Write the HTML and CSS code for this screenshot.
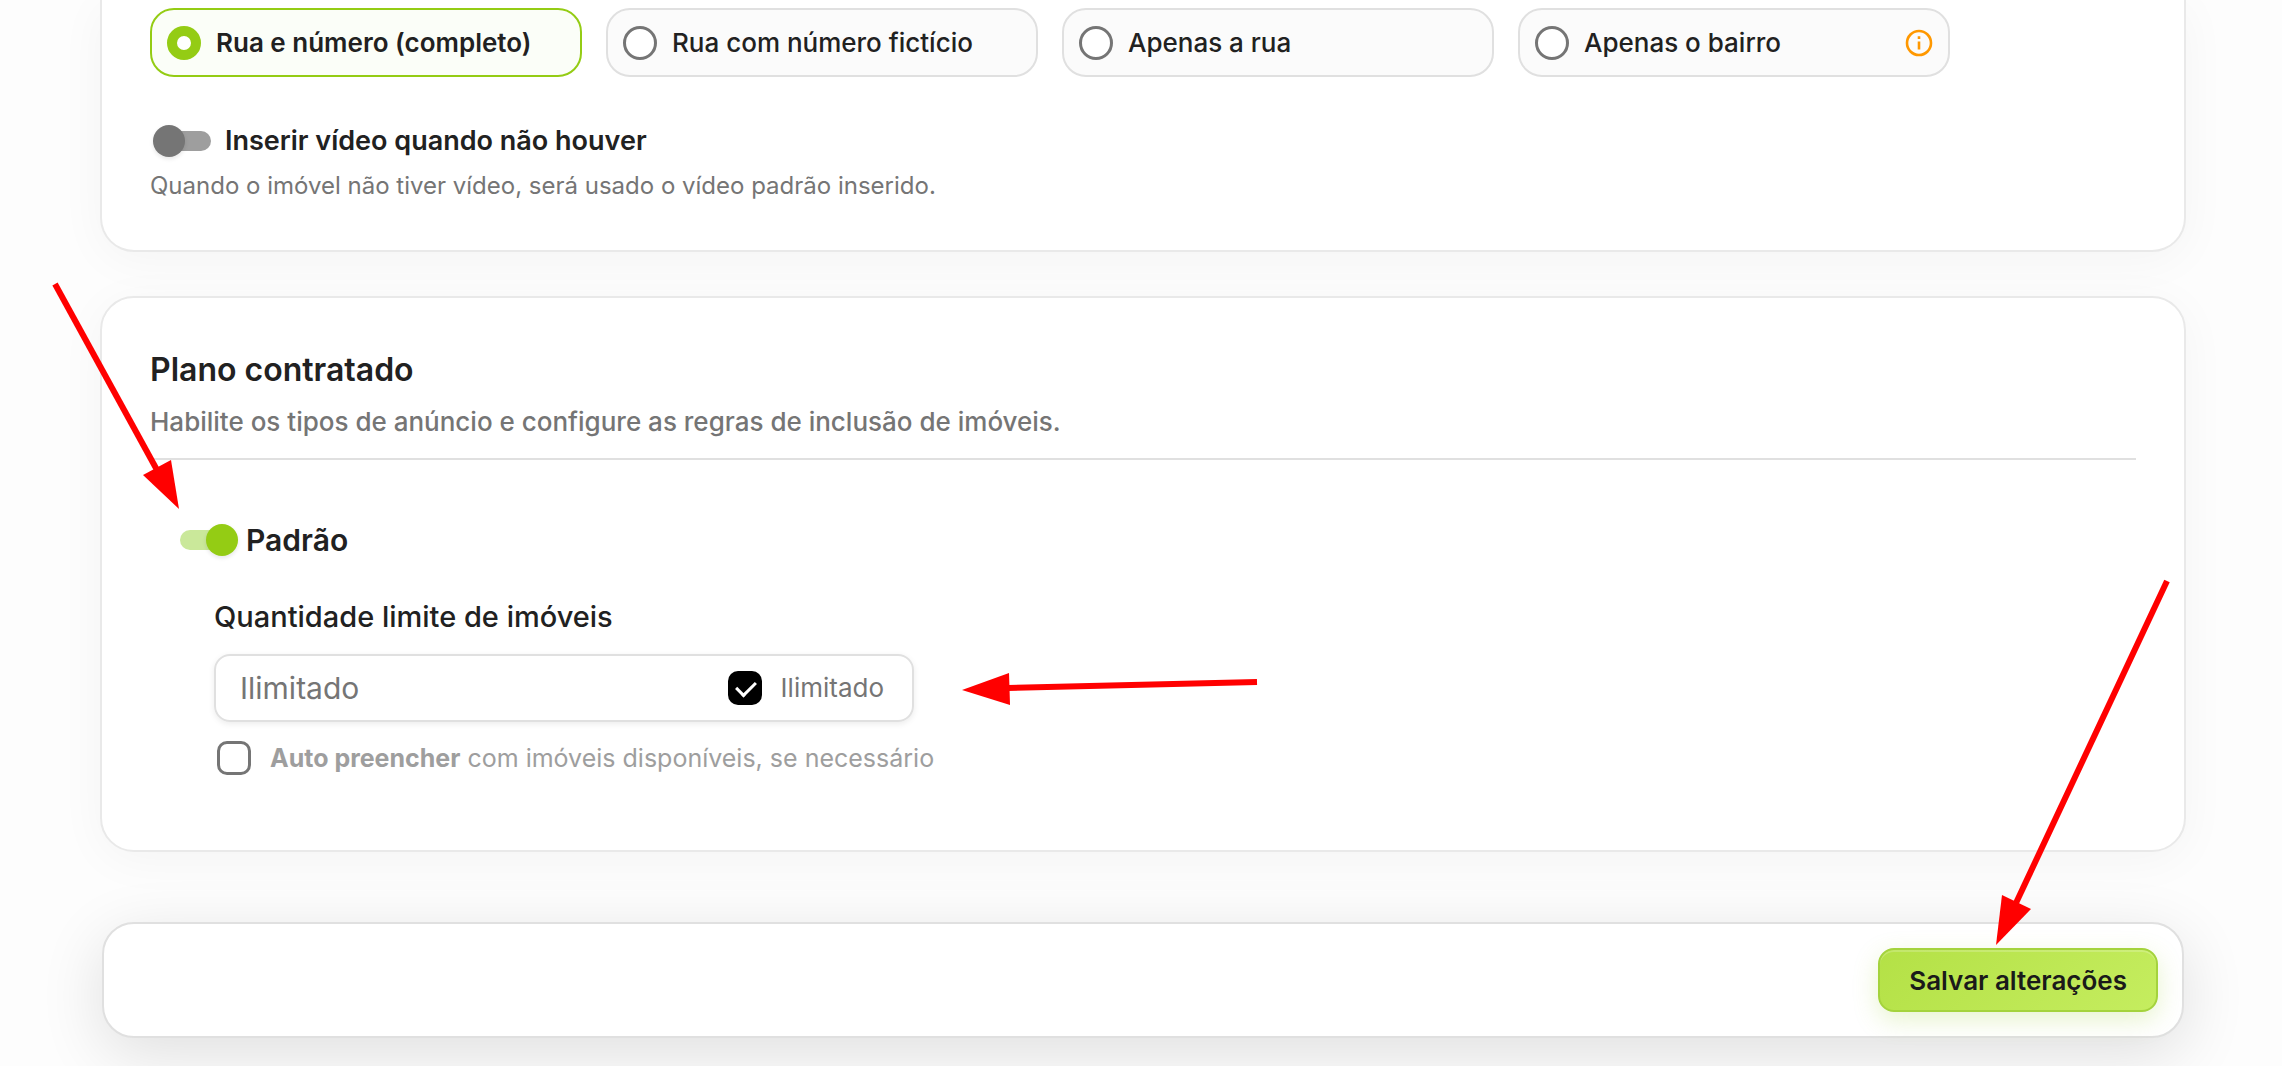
FILE: index.html
```html
<!DOCTYPE html>
<html lang="pt-BR">

<head>
  <meta charset="UTF-8" />
  <meta name="viewport" content="width=device-width, initial-scale=1.0" />
  <title>Configurações do portal</title>
  <link rel="stylesheet" href="styles.css">
</head>

<body>

  <main class="page">
    <section class="card card-address">
      <div class="options">
        <label class="option selected">
          <input type="radio" class="radio" name="endereco" checked>
          <span>Rua e número (completo)</span>
        </label>
        <label class="option">
          <input type="radio" class="radio" name="endereco">
          <span>Rua com número fictício</span>
        </label>
        <label class="option">
          <input type="radio" class="radio" name="endereco">
          <span>Apenas a rua</span>
        </label>
        <label class="option">
          <input type="radio" class="radio" name="endereco">
          <span>Apenas o bairro</span>
          <svg class="info" viewBox="0 0 28 28" aria-hidden="true">
            <circle cx="14" cy="14" r="12" fill="none" stroke="#ff9800" stroke-width="2.6" />
            <path d="M14 12.500v8M14 7.200v2.800" stroke="#ff9800" stroke-width="2.6" />
          </svg>
        </label>
      </div>

      <label class="toggle toggle-video">
        <input type="checkbox" class="switch">
        <span>Inserir vídeo quando não houver</span>
      </label>
      <p class="hint">Quando o imóvel não tiver vídeo, será usado o vídeo padrão inserido.</p>
    </section>

    <section class="card card-plan">
      <header class="card-header">
        <h2>Plano contratado</h2>
        <p>Habilite os tipos de anúncio e configure as regras de inclusão de imóveis.</p>
      </header>

      <div class="plan">
        <label class="toggle toggle-plan">
          <input type="checkbox" class="switch" checked>
          <span>Padrão</span>
        </label>

        <div class="plan-body">
          <label class="field-label" for="limite">Quantidade limite de imóveis</label>
          <div class="field">
            <input type="text" id="limite" class="field-input" placeholder="Ilimitado">
            <label class="field-check">
              <input type="checkbox" class="checkbox" checked>
              <span>Ilimitado</span>
            </label>
            <svg class="arrow arrow-field" viewBox="0 0 296 50" aria-hidden="true">
              <path class="shaft" d="M46 32L295 26" />
              <path class="head" d="M0 34L47 17L48 49Z" />
            </svg>
          </div>
          <label class="auto-fill">
            <input type="checkbox" class="checkbox">
            <span><strong>Auto preencher</strong> com imóveis disponíveis, se necessário</span>
          </label>
        </div>
      </div>

      <svg class="arrow arrow-toggle" viewBox="0 0 130 230" aria-hidden="true">
        <path class="shaft" d="M5 4L107 190" />
        <path class="head" d="M129 229L93 195L121 180Z" />
      </svg>
    </section>

    <footer class="save-bar">
      <button type="submit" class="save-button">Salvar alterações</button>
      <svg class="arrow arrow-save" viewBox="0 0 174 368" aria-hidden="true">
        <path class="shaft" d="M171 4L20 326" />
        <path class="head" d="M0 368L6 318L35 332Z" />
      </svg>
    </footer>
  </main>

</body>

</html>
```

FILE: styles.css
```css
* {
  box-sizing: border-box;
}

body {
  margin: 0;
  background-color: #fdfdfd;
  color: #212121;
  font-family: Inter, sans-serif;
  font-size: 26px;
  line-height: 32px;
}

h2,
p {
  margin: 0;
}

input {
  margin: 0;
  flex-shrink: 0;
}

.page {
  padding: 0 96px 28px 100px;
}

.card {
  position: relative;
  background-color: #fff;
  border: 2px solid #e9e9e9;
  border-radius: 34px;
  box-shadow: 0 8px 48px rgba(0, 0, 0, 0.04);
}

/* Opções de endereço */
.card-address {
  padding: 8px 48px 48px;
  border-top: none;
  border-top-left-radius: 0;
  border-top-right-radius: 0;
}

.options {
  display: grid;
  grid-template-columns: repeat(4, 1fr);
  gap: 24px;
  max-width: 1800px;
}

.option {
  display: flex;
  align-items: center;
  gap: 15px;
  height: 69px;
  padding: 0 15px;
  border: 2px solid #e0e0e0;
  border-radius: 24px;
  background-color: #fbfbfb;
  font-weight: 500;
  cursor: pointer;
}

.option.selected {
  border-color: #94cc14;
  background-color: #fbfef8;
  font-weight: 600;
}

.radio {
  appearance: none;
  width: 34px;
  height: 34px;
  border: 3px solid #757575;
  border-radius: 50%;
  background-color: #fff;
}

.radio:checked {
  border: 10px solid #94cc14;
}

.info {
  width: 28px;
  height: 28px;
  margin-left: auto;
}

/* Interruptores */
.toggle {
  display: flex;
  align-items: center;
  cursor: pointer;
  font-weight: 600;
}

.switch {
  appearance: none;
  position: relative;
  width: 52px;
  height: 20px;
  border-radius: 10px;
  background-color: #9e9e9e;
}

.switch::before {
  content: '';
  position: absolute;
  top: -6px;
  left: -6px;
  width: 32px;
  height: 32px;
  border-radius: 50%;
  background-color: #757575;
  box-shadow: 0 2px 4px rgba(0, 0, 0, 0.1);
}

.switch:checked {
  background-color: #cae89a;
}

.switch:checked::before {
  left: 26px;
  background-color: #94cc14;
}

.toggle-video {
  gap: 14px;
  margin-top: 48px;
  padding-left: 9px;
  font-size: 27px;
}

.toggle-plan {
  gap: 14px;
  font-size: 30px;
}

.hint {
  margin-top: 13px;
  color: #757575;
  font-size: 24px;
}

/* Plano contratado */
.card-plan {
  margin-top: 44px;
  padding: 54px 48px 75px;
}

.card-header {
  padding-bottom: 20px;
  border-bottom: 2px solid #e0e0e0;
}

.card-header h2 {
  font-size: 32px;
  font-weight: 600;
  line-height: 36px;
}

.card-header p {
  margin-top: 18px;
  color: #757575;
  font-weight: 500;
}

.plan {
  padding: 64px 30px 0;
}

.plan-body {
  display: flex;
  flex-direction: column;
  align-items: flex-start;
  padding-left: 34px;
}

.field-label {
  margin-top: 45px;
  font-size: 29px;
  font-weight: 500;
}

.field {
  position: relative;
  display: flex;
  align-items: center;
  width: 700px;
  max-width: 100%;
  height: 68px;
  margin-top: 21px;
  padding: 0 28px 0 24px;
  border: 2px solid #e0e0e0;
  border-radius: 16px;
  box-shadow: 0 2px 6px rgba(0, 0, 0, 0.08);
}

.field-input {
  flex: 1;
  min-width: 0;
  padding: 0;
  border: none;
  outline: none;
  background: none;
  font-family: inherit;
  font-size: 30px;
}

.field-input::placeholder {
  color: #757575;
}

.field-check {
  display: flex;
  align-items: center;
  gap: 19px;
  color: #757575;
}

.checkbox {
  appearance: none;
  width: 34px;
  height: 34px;
  border: 3px solid #757575;
  border-radius: 10px;
  background-color: #fff;
}

.checkbox:checked {
  position: relative;
  border: none;
  background-color: #000;
}

.checkbox:checked::before {
  content: '';
  position: absolute;
  top: 6px;
  left: 12px;
  width: 9px;
  height: 16px;
  border: solid #fff;
  border-width: 0 3px 3px 0;
  transform: rotate(45deg);
}

.auto-fill {
  display: flex;
  align-items: center;
  gap: 19px;
  margin-top: 19px;
  padding-left: 3px;
  color: #9e9e9e;
  font-size: 25px;
}

/* Barra de salvar */
.save-bar {
  position: relative;
  display: flex;
  justify-content: flex-end;
  margin: 70px 2px 0;
  padding: 24px;
  border: 2px solid #e0e0e0;
  border-radius: 32px;
  background-color: #fff;
  box-shadow: 0 16px 64px rgba(0, 0, 0, 0.12);
}

.save-button {
  height: 64px;
  padding: 0 29px;
  border: 2px solid #a4d33c;
  border-radius: 16px;
  background: linear-gradient(135deg, #b4e146, #c5ed5f);
  box-shadow: 0 8px 24px rgba(164, 211, 60, 0.25), inset 0 2px 0 rgba(255, 255, 255, 0.2);
  color: #1a1a1a;
  font-family: inherit;
  font-size: 26px;
  font-weight: 600;
  cursor: pointer;
}

/* Setas de destaque */
.arrow {
  position: absolute;
  z-index: 1;
  pointer-events: none;
}

.shaft {
  fill: none;
  stroke: #f00;
  stroke-width: 6;
}

.head {
  fill: #f00;
}

.arrow-toggle {
  top: -18px;
  left: -52px;
  width: 130px;
  height: 230px;
}

.arrow-field {
  top: 0;
  left: 746px;
  width: 296px;
  height: 50px;
}

.arrow-save {
  right: 12px;
  bottom: 91px;
  width: 174px;
  height: 368px;
}
```
